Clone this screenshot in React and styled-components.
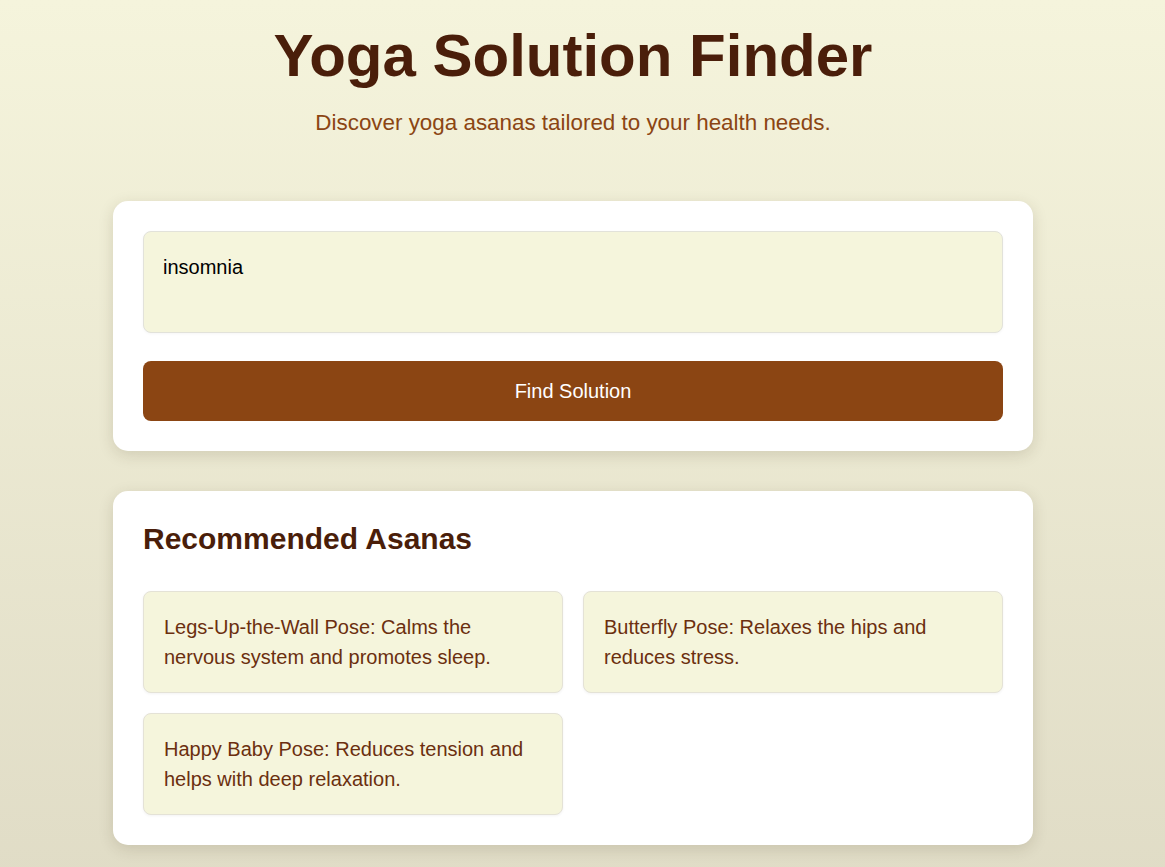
import React, { useState } from "react";
import styled, { createGlobalStyle } from "styled-components";

const GlobalStyle = createGlobalStyle`
  * { box-sizing: border-box; }
  html, body { margin: 0; padding: 0; }
  body {
    min-height: 100vh;
    font-family: "Liberation Sans", Arial, sans-serif;
    background: linear-gradient(to bottom, #f5f4dc, #e0dcc6);
  }
`;

const Page = styled.div`
  min-height: 100vh;
  padding: 21px 19px 40px 0;
`;

const Header = styled.header`
  text-align: center;
  margin-bottom: 65px;
`;

const Title = styled.h1`
  margin: 0 0 20px;
  font-size: 60px;
  line-height: 69px;
  font-weight: 700;
  color: #4a1e0a;
`;

const Subtitle = styled.p`
  margin: 0;
  font-size: 22.4px;
  line-height: 26px;
  color: #8b4513;
`;

const Main = styled.main`
  max-width: 920px;
  margin: 0 auto;
  display: flex;
  flex-direction: column;
  gap: 40px;
`;

const Card = styled.section`
  background: #ffffff;
  border-radius: 15px;
  padding: 30px;
  box-shadow: 0 4px 15px rgba(60, 50, 20, 0.15);
`;

const Form = styled.form`
  display: flex;
  flex-direction: column;
  gap: 28px;
`;

const Input = styled.textarea`
  display: block;
  width: 100%;
  height: 102px;
  padding: 20px 19px;
  font-family: inherit;
  font-size: 20px;
  line-height: 30px;
  color: #000;
  background: #f5f5dc;
  border: 1px solid #e2e2da;
  border-radius: 8px;
  resize: none;
  outline: none;
  box-shadow: 0 1px 3px rgba(0, 0, 0, 0.04);
`;

const Button = styled.button`
  height: 60px;
  border: none;
  border-radius: 8px;
  background: #8b4513;
  color: #ffffff;
  font-family: inherit;
  font-size: 20px;
  cursor: pointer;
`;

const Heading = styled.h2`
  margin: 0 0 35px;
  font-size: 30px;
  line-height: 35px;
  font-weight: 700;
  color: #4a1e0a;
`;

const Grid = styled.div`
  display: grid;
  grid-template-columns: 1fr 1fr;
  gap: 20px;
`;

const Asana = styled.div`
  padding: 20px;
  background: #f5f5dc;
  border: 1px solid #e4e2d6;
  border-radius: 8px;
  font-size: 20px;
  line-height: 30px;
  color: #6b2f0f;
  box-shadow: 0 1px 3px rgba(0, 0, 0, 0.05);
`;

const asanas = [
  "Legs-Up-the-Wall Pose: Calms the nervous system and promotes sleep.",
  "Butterfly Pose: Relaxes the hips and reduces stress.",
  "Happy Baby Pose: Reduces tension and helps with deep relaxation.",
];

export default function App() {
  const [query, setQuery] = useState("insomnia");

  return (
    <Page>
      <GlobalStyle />
      <Header>
        <Title>Yoga Solution Finder</Title>
        <Subtitle>Discover yoga asanas tailored to your health needs.</Subtitle>
      </Header>
      <Main>
        <Card>
          <Form onSubmit={(e) => e.preventDefault()}>
            <Input value={query} onChange={(e) => setQuery(e.target.value)} />
            <Button type="submit">Find Solution</Button>
          </Form>
        </Card>
        <Card>
          <Heading>Recommended Asanas</Heading>
          <Grid>
            {asanas.map((a) => (
              <Asana key={a}>{a}</Asana>
            ))}
          </Grid>
        </Card>
      </Main>
    </Page>
  );
}
